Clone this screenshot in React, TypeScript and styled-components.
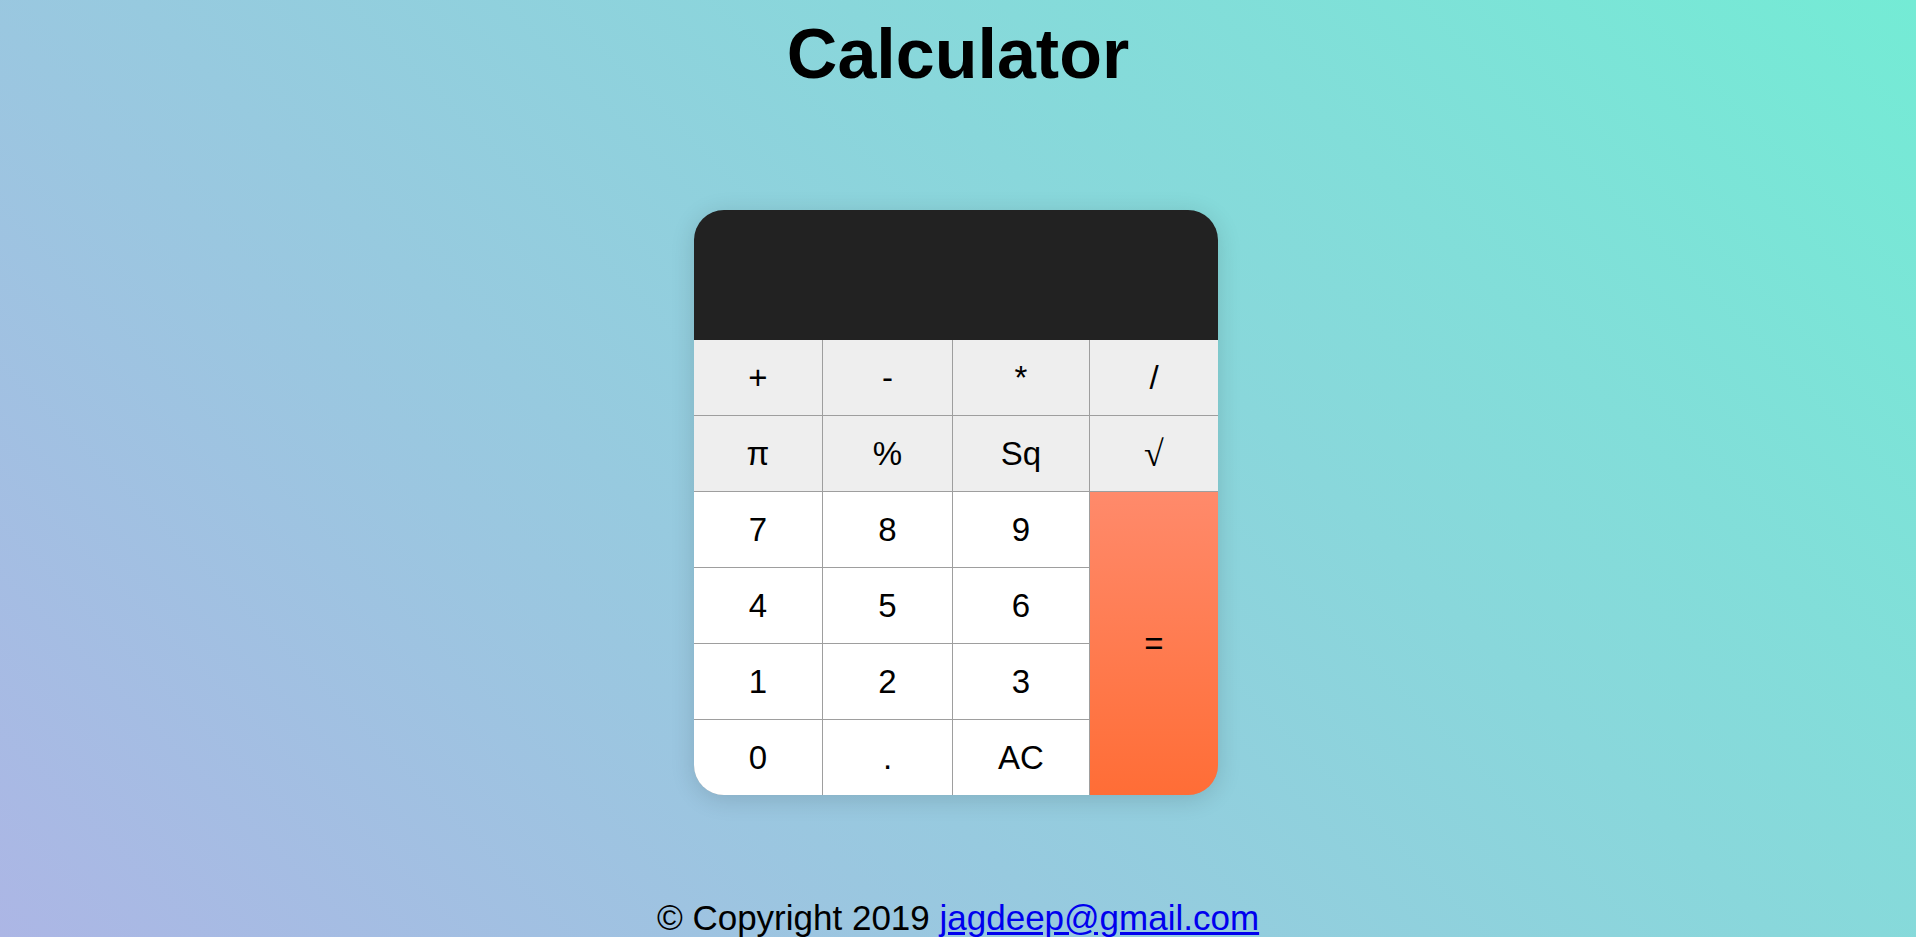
import React from "react";
import styled, { createGlobalStyle } from "styled-components";

const GlobalStyle = createGlobalStyle`
  html, body {
    margin: 0;
    padding: 0;
  }
  body {
    font-family: "Liberation Sans", Arial, sans-serif;
    background: linear-gradient(45deg, #acb6e5, #74ebd5);
    min-height: 100vh;
  }
`;

const Page = styled.div`
  min-height: 937px;
  display: flex;
  flex-direction: column;
  align-items: center;
`;

const Title = styled.h1`
  margin: 14px 0 0;
  font-size: 70px;
  font-weight: 700;
  line-height: 80px;
  color: #000;
`;

const Calculator = styled.div`
  margin: 116px 4px 0 0;
  width: 524px;
  border-radius: 30px;
  overflow: hidden;
  box-shadow: 0 4px 24px rgba(0, 0, 0, 0.14);
  display: flex;
  flex-direction: column;
`;

const Display = styled.div`
  height: 130px;
  background: #222222;
`;

const Keypad = styled.div`
  display: grid;
  grid-template-columns: 128px 129px 136px 128px;
  grid-template-rows: repeat(6, 75px);
  gap: 1px;
  background: #9e9e9e;
`;

const Key = styled.button<{ $tone: "op" | "num" | "eq"; $span?: number }>`
  border: none;
  margin: 0;
  padding: 0;
  display: flex;
  align-items: center;
  justify-content: center;
  font-family: "Liberation Sans", Arial, sans-serif;
  font-size: 33px;
  color: #000;
  cursor: pointer;
  background: ${(p) =>
    p.$tone === "op"
      ? "#eeeeee"
      : p.$tone === "eq"
      ? "linear-gradient(180deg, #ff8a6b, #ff6d36)"
      : "#ffffff"};
  ${(p) => (p.$span ? `grid-row: span ${p.$span};` : "")}
`;

const RootGlyph = styled.span`
  font-family: "Liberation Serif", "DejaVu Serif", serif;
  font-size: 36px;
  font-weight: 400;
`;

const Footer = styled.footer`
  margin-top: 103px;
  font-size: 35px;
  line-height: 40px;
  color: #000;
`;

const MailLink = styled.a`
  color: #0000ee;
  text-decoration: underline;
`;

type KeyDef = { label: React.ReactNode; tone: "op" | "num" | "eq"; span?: number };

const keys: KeyDef[] = [
  { label: "+", tone: "op" },
  { label: "-", tone: "op" },
  { label: "*", tone: "op" },
  { label: "/", tone: "op" },
  { label: "π", tone: "op" },
  { label: "%", tone: "op" },
  { label: "Sq", tone: "op" },
  { label: <RootGlyph>√</RootGlyph>, tone: "op" },
  { label: "7", tone: "num" },
  { label: "8", tone: "num" },
  { label: "9", tone: "num" },
  { label: "=", tone: "eq", span: 4 },
  { label: "4", tone: "num" },
  { label: "5", tone: "num" },
  { label: "6", tone: "num" },
  { label: "1", tone: "num" },
  { label: "2", tone: "num" },
  { label: "3", tone: "num" },
  { label: "0", tone: "num" },
  { label: ".", tone: "num" },
  { label: "AC", tone: "num" },
];

export default function App() {
  return (
    <>
      <GlobalStyle />
      <Page>
        <Title>Calculator</Title>
        <Calculator>
          <Display />
          <Keypad>
            {keys.map((k, i) => (
              <Key key={i} $tone={k.tone} $span={k.span}>
                {k.label}
              </Key>
            ))}
          </Keypad>
        </Calculator>
        <Footer>
          © Copyright 2019 <MailLink href="#">jagdeep@gmail.com</MailLink>
        </Footer>
      </Page>
    </>
  );
}
